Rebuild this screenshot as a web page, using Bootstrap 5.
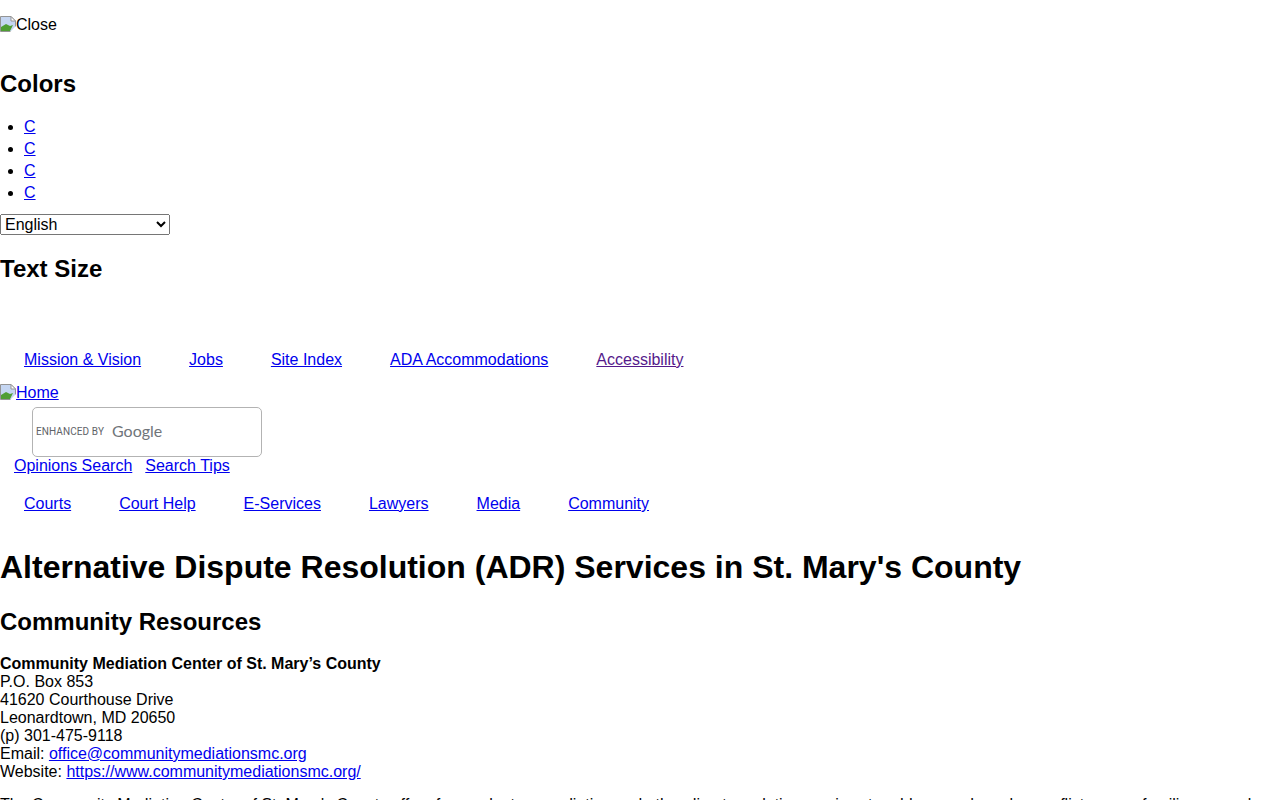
<!DOCTYPE html>
<html lang="en">
<head>
  <title>Alternative Dispute Resolution (ADR) Services in St. Mary's County</title>
  <meta charset="UTF-8" />
  <link href="https://cdn.jsdelivr.net/npm/bootstrap@5.3.0/dist/css/bootstrap.min.css" rel="stylesheet">
  <style>
    html, body {
      height: 100%;
      overflow: hidden;
    }

    body {
      font-family: "Liberation Sans", Arial, sans-serif;
      font-size: 16px;
      line-height: normal;
      color: #000;
      background: #fff;
    }

    a { color: #0000ee; }
    a.visited-link { color: #551a8b; }

    .broken-img {
      width: 16px;
      height: 16px;
      vertical-align: -2px;
    }

    .close-row { padding-top: 16px; height: 41px; }

    h2.side-title {
      font-size: 24px;
      font-weight: 700;
      line-height: 27px;
      margin: 0;
    }

    .colors-title { margin-top: 29px !important; }

    .color-list {
      margin: 19px 0 0;
      padding-left: 40px;
      list-style: disc;
    }
    .color-list li { height: 22px; line-height: 22px; margin-left: -16px; }

    .lang-select {
      display: block;
      width: 170px;
      height: 21px;
      margin-top: 10px;
      padding: 0;
      font-size: 16px;
      font-family: "Liberation Sans", Arial, sans-serif;
    }

    .size-title { margin-top: 20px !important; }

    .top-links { margin-top: 69px; padding-left: 24px; gap: 48px; }
    .main-links { margin-top: 20px; padding-left: 24px; gap: 48px; }

    .home-row { margin-top: 15px; height: 21px; }

    .search-box {
      width: 230px;
      height: 50px;
      margin-left: 32px;
      margin-top: -6px;
      padding: 0 0 2px 3px;
      border: 1px solid #b3b3b3;
      border-radius: 5px;
    }
    .search-spacer { height: 8px; }
    .enhanced {
      font-family: Roboto, "Liberation Sans", sans-serif;
      font-size: 10px;
      font-weight: 400;
      letter-spacing: .1px;
      color: #5f6368;
    }
    .google-word {
      font-family: Lato, "Liberation Sans", sans-serif;
      font-size: 16px;
      color: #70757a;
      margin: 0 0 2px 8px;
    }

    .search-links { padding-left: 14px; gap: 13px; }

    h1.page-title {
      font-size: 32px;
      font-weight: 700;
      line-height: 37px;
      margin: 36px 0 0;
    }

    h2.sub-title {
      font-size: 24px;
      font-weight: 700;
      line-height: 27px;
      margin: 22px 0 0;
    }

    .contact { margin: 20px 0 0; line-height: 18px; }
    .intro { margin: 15px 0 0; line-height: 18px; }
  </style>
</head>
<body>

  <div class="close-row">
    <svg class="broken-img" viewBox="0 0 16 16" role="img" aria-label="broken image">
      <path d="M.5.500h10.500l4.500 4.500v10.500h-15z" fill="#c5d6f2" stroke="#949494"/>
      <path d="M11 .5v4.500h4.500z" fill="#fff" stroke="#949494"/>
      <path d="M1 15v-4l5-3 4 2 3-1-3 6z" fill="#4f9e34"/>
      <path d="M10 16l6-6v6z" fill="#fff"/>
    </svg>Close
  </div>

  <h2 class="side-title colors-title">Colors</h2>
  <ul class="color-list">
    <li><a href="#">C</a></li>
    <li><a href="#">C</a></li>
    <li><a href="#">C</a></li>
    <li><a href="#">C</a></li>
  </ul>

  <select class="lang-select" title="Language">
    <option>English</option>
  </select>

  <h2 class="side-title size-title">Text Size</h2>

  <div class="d-flex top-links">
    <a href="#">Mission &amp; Vision</a>
    <a href="#">Jobs</a>
    <a href="#">Site Index</a>
    <a href="#">ADA Accommodations</a>
    <a href="#" class="visited-link">Accessibility</a>
  </div>

  <div class="home-row">
    <a href="#"><svg class="broken-img" viewBox="0 0 16 16" role="img" aria-label="broken image">
      <path d="M.5.500h10.500l4.500 4.500v10.500h-15z" fill="#c5d6f2" stroke="#949494"/>
      <path d="M11 .5v4.500h4.500z" fill="#fff" stroke="#949494"/>
      <path d="M1 15v-4l5-3 4 2 3-1-3 6z" fill="#4f9e34"/>
      <path d="M10 16l6-6v6z" fill="#fff"/>
    </svg>Home</a>
  </div>

  <div class="search-spacer"></div>
  <div class="search-box d-flex align-items-center">
    <span class="enhanced">ENHANCED BY</span><span class="google-word">Google</span>
  </div>

  <div class="d-flex search-links">
    <a href="#">Opinions Search</a>
    <a href="#">Search Tips</a>
  </div>

  <div class="d-flex main-links">
    <a href="#">Courts</a>
    <a href="#">Court Help</a>
    <a href="#">E-Services</a>
    <a href="#">Lawyers</a>
    <a href="#">Media</a>
    <a href="#">Community</a>
  </div>

  <h1 class="page-title">Alternative Dispute Resolution (ADR) Services in St. Mary's County</h1>
  <h2 class="sub-title">Community Resources</h2>

  <p class="contact">
    <strong>Community Mediation Center of St. Mary’s County</strong><br>
    P.O. Box 853<br>
    41620 Courthouse Drive<br>
    Leonardtown, MD 20650<br>
    (p) 301-475-9118<br>
    Email: <a href="#">office@communitymediationsmc.org</a><br>
    Website: <a href="#">https://www.communitymediationsmc.org/</a>
  </p>

  <p class="intro">The Community Mediation Center of St. Mary's County offers free, voluntary mediation and other direct resolution services to address and resolve conflict among families, coworkers and neighbors.</p>

  <script src="https://cdn.jsdelivr.net/npm/bootstrap@5.3.0/dist/js/bootstrap.bundle.min.js"></script>
</body>
</html>
